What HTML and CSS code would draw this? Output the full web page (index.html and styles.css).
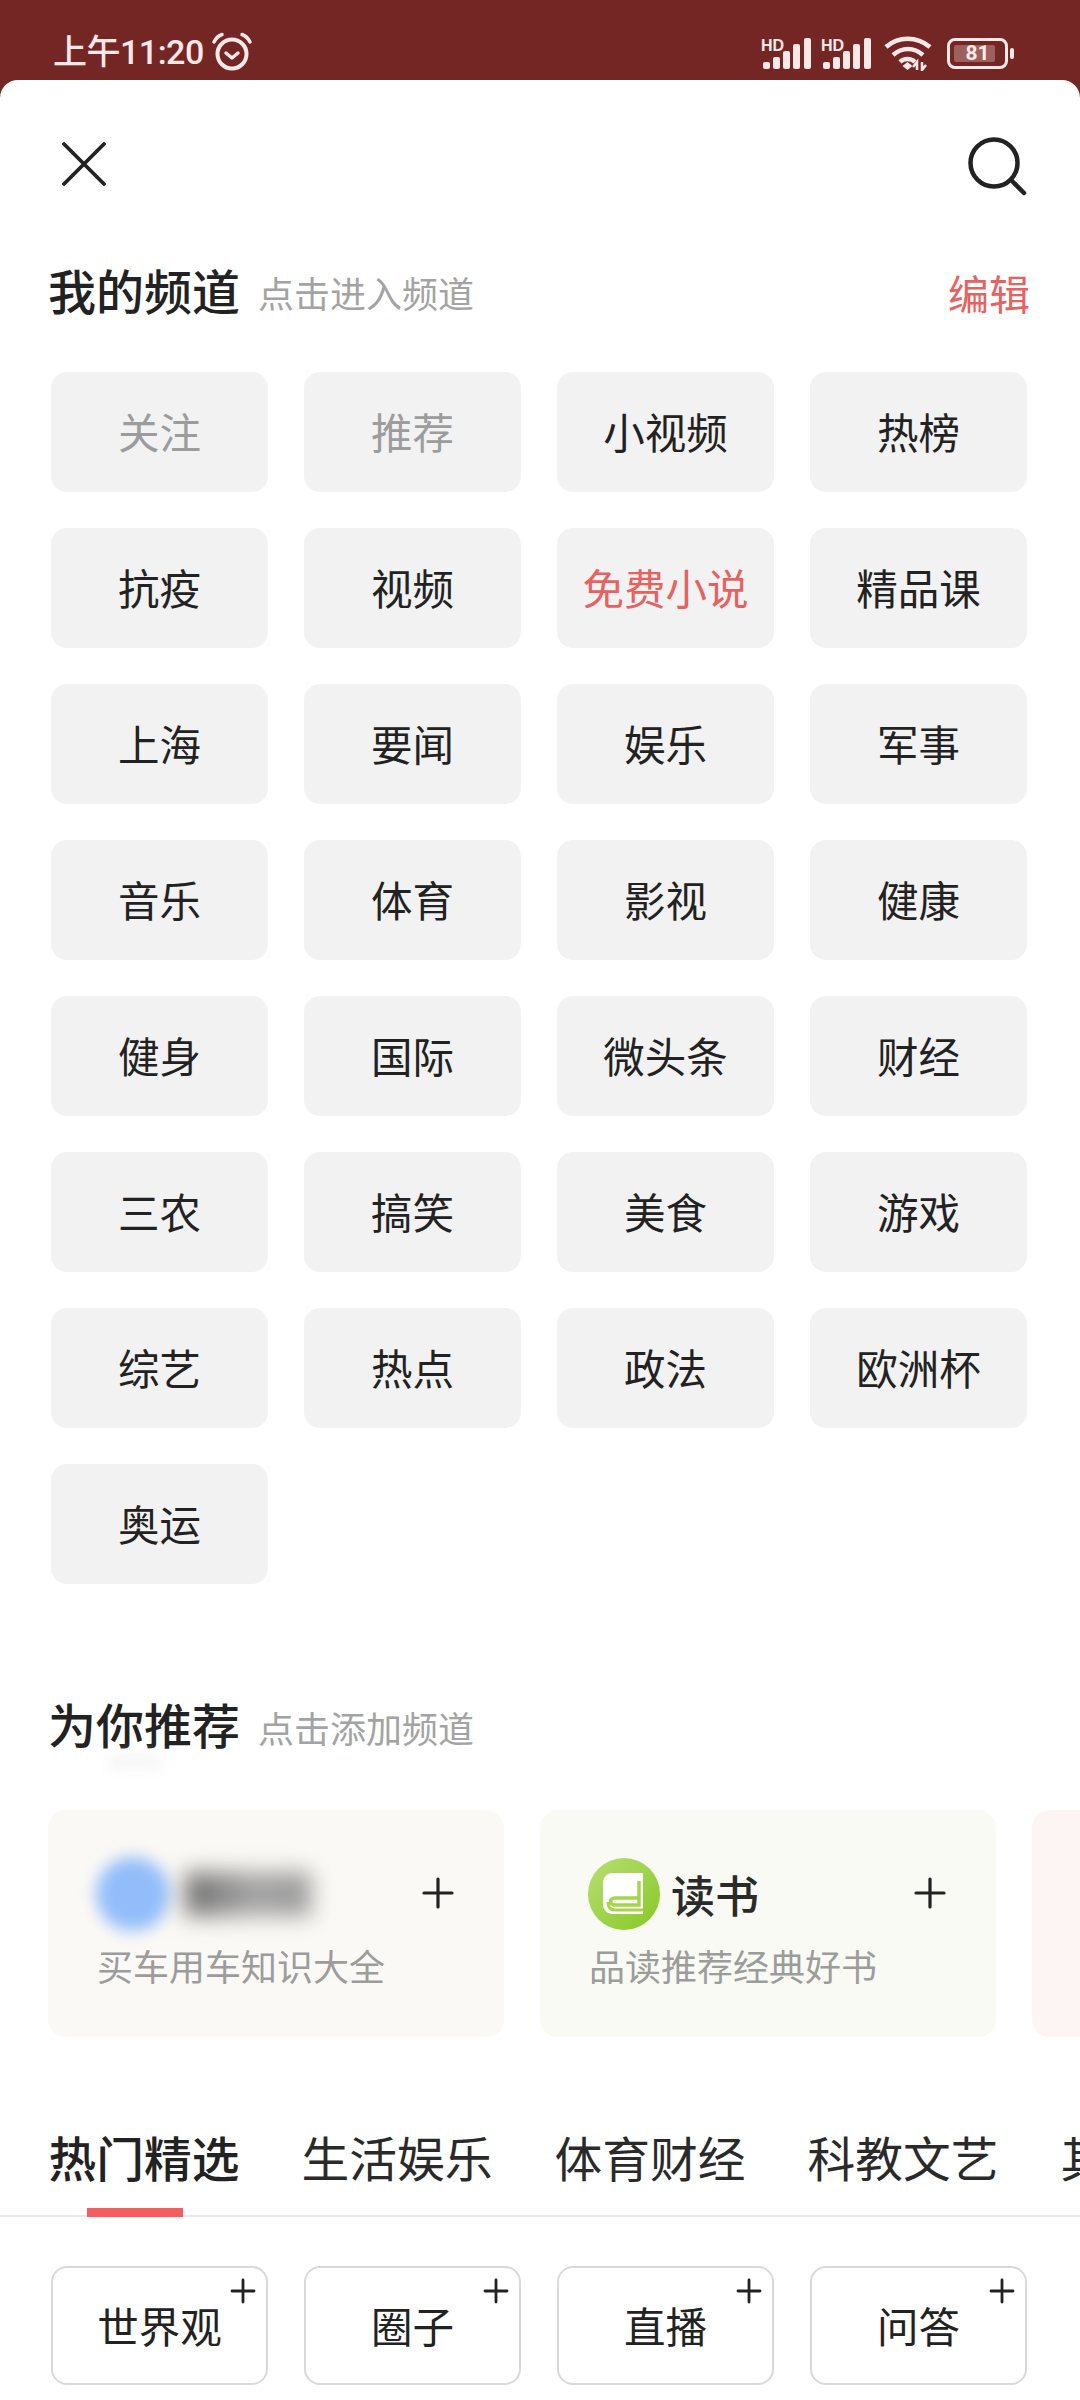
FILE: index.html
```html
<!DOCTYPE html>
<html lang="zh-CN">
<head>
<meta charset="utf-8">
<title>频道</title>
<link rel="stylesheet" href="styles.css">
</head>
<body>
<div class="status">
  <div class="status-left">
    <span class="clock">上午11:20</span>
    <svg class="alarm" width="42" height="40" viewBox="0 0 42 40" fill="none" stroke="#fbe9e7" stroke-linecap="round" stroke-linejoin="round">
      <circle cx="21" cy="22" r="14.5" stroke-width="4"/>
      <path d="M15 21l6 5 6-5" stroke-width="3.5"/>
      <path d="M3 10C5 6 8 3.500 11 2.500M39 10C37 6 34 3.500 31 2.500" stroke-width="3.500"/>
    </svg>
  </div>
  <div class="status-right">
    <svg class="signal" width="50" height="34" viewBox="0 0 50 34" fill="#fbe9e7">
      <text x="0" y="15" class="hd">HD</text>
      <rect x="2" y="26" width="7" height="7" rx="2"/><rect x="12" y="21" width="7" height="12" rx="2"/><rect x="22" y="15" width="7" height="18" rx="2"/><rect x="32" y="8" width="7" height="25" rx="2"/><rect x="43" y="2" width="7" height="31" rx="2"/>
    </svg>
    <svg class="signal" width="50" height="34" viewBox="0 0 50 34" fill="#fbe9e7">
      <text x="0" y="15" class="hd">HD</text>
      <rect x="2" y="26" width="7" height="7" rx="2"/><rect x="12" y="21" width="7" height="12" rx="2"/><rect x="22" y="15" width="7" height="18" rx="2"/><rect x="32" y="8" width="7" height="25" rx="2"/><rect x="43" y="2" width="7" height="31" rx="2"/>
    </svg>
    <svg class="wifi" width="48" height="36" viewBox="0 0 48 36" fill="none" stroke="#fbe9e7" stroke-width="4.500">
      <path d="M2 12C14 1 33 1 46 12"/>
      <path d="M9 20C18 12 30 12 39 20"/>
      <path d="M16 27C20 23 27 23 31 27"/>
      <path d="M18.500 31l5-4 5 4-5 4z" fill="#fbe9e7" stroke="none"/>
      <path d="M33 35v-8l-4 5M38 27v8l4-5" stroke-width="2.500"/>
    </svg>
    <div class="battery">
      <div class="battery-body">
        <span class="battery-fill"></span>
        <span class="battery-num">81</span>
      </div>
      <span class="battery-nub"></span>
    </div>
  </div>
</div>

<main class="sheet">
  <header class="top">
    <svg width="44" height="44" viewBox="0 0 44 44" fill="none" stroke="#222" stroke-width="3.800" stroke-linecap="round"><path d="M2 2l40 40M42 2L2 42"/></svg>
    <svg class="search" width="60" height="60" viewBox="0 0 60 60" fill="none" stroke="#222" stroke-width="4.500" stroke-linecap="round"><circle cx="26" cy="26" r="23.500"/><path d="M43 43l13 13"/></svg>
  </header>

  <div class="heading">
    <h2 class="heading-title">我的频道</h2>
    <span class="heading-sub">点击进入频道</span>
    <span class="edit">编辑</span>
  </div>

  <div class="grid">
    <div class="chip muted">关注</div><div class="chip muted">推荐</div><div class="chip">小视频</div><div class="chip">热榜</div>
    <div class="chip">抗疫</div><div class="chip">视频</div><div class="chip red">免费小说</div><div class="chip">精品课</div>
    <div class="chip">上海</div><div class="chip">要闻</div><div class="chip">娱乐</div><div class="chip">军事</div>
    <div class="chip">音乐</div><div class="chip">体育</div><div class="chip">影视</div><div class="chip">健康</div>
    <div class="chip">健身</div><div class="chip">国际</div><div class="chip">微头条</div><div class="chip">财经</div>
    <div class="chip">三农</div><div class="chip">搞笑</div><div class="chip">美食</div><div class="chip">游戏</div>
    <div class="chip">综艺</div><div class="chip">热点</div><div class="chip">政法</div><div class="chip">欧洲杯</div>
    <div class="chip">奥运</div>
  </div>

  <div class="heading heading-second">
    <h2 class="heading-title">为你推荐</h2>
    <span class="heading-sub">点击添加频道</span>
    <span class="smudge"></span>
  </div>

  <div class="rail">
    <article class="card card-cream">
      <div class="card-head">
        <span class="blur-avatar"></span>
        <span class="blur-name"></span>
        <svg class="card-plus" width="32" height="32" viewBox="0 0 32 32" stroke="#222" stroke-width="3.200" stroke-linecap="round"><path d="M2 16h28M16 2v28"/></svg>
      </div>
      <p class="card-sub">买车用车知识大全</p>
    </article>
    <article class="card card-green">
      <div class="card-head">
        <svg class="book" width="72" height="72" viewBox="0 0 72 72">
          <defs><linearGradient id="bookbg" x1="0" y1="0" x2="1" y2="1"><stop offset="0" stop-color="#b8de74"/><stop offset="1" stop-color="#86c924"/></linearGradient></defs>
          <circle cx="36" cy="36" r="36" fill="url(#bookbg)"/>
          <path d="M25 15H55V56H25C19 56 15 52 15 46V25C15 19 19 15 25 15Z" fill="#fff"/>
          <path d="M51 23V47H27C21 47 21 40 27 40H51" fill="none" stroke="#a4d64c" stroke-width="3.500"/>
          <path d="M20 44C20 49 22 52 27 52H55" fill="none" stroke="#a4d64c" stroke-width="3"/>
        </svg>
        <span class="card-title">读书</span>
        <svg class="card-plus" width="32" height="32" viewBox="0 0 32 32" stroke="#222" stroke-width="3.200" stroke-linecap="round"><path d="M2 16h28M16 2v28"/></svg>
      </div>
      <p class="card-sub">品读推荐经典好书</p>
    </article>
    <article class="card card-pink"></article>
  </div>

  <nav class="tabs">
    <span class="tab tab-active">热门精选<i class="tab-bar"></i></span>
    <span class="tab">生活娱乐</span>
    <span class="tab">体育财经</span>
    <span class="tab">科教文艺</span>
    <span class="tab">其他</span>
  </nav>

  <div class="grid grid-add">
    <div class="chip chip-add">世界观<svg class="add" width="26" height="26" viewBox="0 0 26 26" stroke="#222" stroke-width="2.800" stroke-linecap="round"><path d="M2 13h22M13 2v22"/></svg></div>
    <div class="chip chip-add">圈子<svg class="add" width="26" height="26" viewBox="0 0 26 26" stroke="#222" stroke-width="2.800" stroke-linecap="round"><path d="M2 13h22M13 2v22"/></svg></div>
    <div class="chip chip-add">直播<svg class="add" width="26" height="26" viewBox="0 0 26 26" stroke="#222" stroke-width="2.800" stroke-linecap="round"><path d="M2 13h22M13 2v22"/></svg></div>
    <div class="chip chip-add">问答<svg class="add" width="26" height="26" viewBox="0 0 26 26" stroke="#222" stroke-width="2.800" stroke-linecap="round"><path d="M2 13h22M13 2v22"/></svg></div>
  </div>
</main>
</body>
</html>
```

FILE: styles.css
```css
* { box-sizing: border-box; }
html, body {
  margin: 0;
  width: 1080px;
  height: 2400px;
  overflow: hidden;
  background: #742625;
  font-family: "Noto Sans CJK SC", "Noto Sans", sans-serif;
  color: #222;
}
h2, p { margin: 0; }

.status {
  height: 80px;
  display: flex;
  justify-content: space-between;
  align-items: flex-start;
  padding: 32px 66px 0 53px;
  color: #fbe9e7;
}
.status-left { display: flex; align-items: center; gap: 7px; }
.clock { font: 500 34px/40px Roboto, "Noto Sans CJK SC", sans-serif; letter-spacing: -0.500px; }
.status-right { display: flex; align-items: center; gap: 10px; padding-top: 3px; }
.hd { font: 700 16px "Liberation Sans", sans-serif; }
.wifi { margin: 0 3px; }
.battery { display: flex; align-items: center; gap: 2px; margin-left: 2px; }
.battery-body {
  position: relative;
  width: 61px;
  height: 31px;
  border: 3px solid #fbe9e7;
  border-radius: 8px;
  display: flex;
  align-items: center;
  justify-content: center;
}
.battery-fill {
  position: absolute;
  left: 4px; top: 4px; bottom: 4px;
  width: 41px;
  background: rgba(251, 233, 231, .3);
  border-radius: 2px;
}
.battery-num { position: relative; font: 700 21px/24px Roboto, sans-serif; }
.battery-nub { width: 4px; height: 11px; background: #fbe9e7; border-radius: 2px; }

.sheet {
  height: 2320px;
  background: #fff;
  border-radius: 18px 18px 0 0;
  overflow: hidden;
}
.top {
  height: 168px;
  display: flex;
  justify-content: space-between;
  align-items: center;
  padding: 0 52px 0 62px;
}
.search { margin-top: 6px; }
.heading {
  position: relative;
  height: 84px;
  display: flex;
  align-items: center;
  gap: 18px;
  padding: 0 50px 0 48px;
}
.heading-title { font-size: 48px; line-height: 60px; font-weight: 500; padding-bottom: 2px; }
.heading-sub { font-size: 36px; line-height: 60px; color: #a3a3a3; padding-top: 4px; }
.edit { margin-left: auto; font-size: 41px; line-height: 60px; color: #e96060; padding-top: 4px; }
.heading-second { margin-top: 99px; }
.heading-second .heading-title { padding-bottom: 4px; }
.smudge {
  position: absolute;
  left: 108px; top: 74px;
  width: 54px; height: 10px;
  background: #f2f2f2;
  filter: blur(7px);
}

.grid {
  margin-top: 40px;
  padding: 0 53px 0 51px;
  display: grid;
  grid-template-columns: repeat(4, 217px);
  justify-content: space-between;
  row-gap: 36px;
}
.chip {
  position: relative;
  height: 120px;
  border-radius: 16px;
  background: #f2f2f2;
  display: flex;
  align-items: center;
  justify-content: center;
  padding-bottom: 2px;
  font-size: 41.500px;
  line-height: 50px;
  color: #222;
}
.muted { color: #9c9c9c; }
.red { color: #e96060; }

.rail {
  margin-top: 43px;
  padding-left: 48px;
  display: flex;
  gap: 36px;
}
.card {
  flex: 0 0 456px;
  height: 227px;
  border-radius: 18px;
  padding: 48px 0 0 48px;
}
.card-cream { background: #fbf9f5; }
.card-green { background: #f8faf3; }
.card-pink { background: #fdf5f4; }
.card-head {
  position: relative;
  height: 72px;
  display: flex;
  align-items: center;
  gap: 11px;
}
.card-title { font-size: 44px; line-height: 60px; font-weight: 500; color: #2a2a2a; }
.card-plus { position: absolute; right: 50px; top: 19px; }
.blur-avatar {
  width: 74px; height: 74px;
  border-radius: 50%;
  background: #92bdfa;
  filter: blur(8px);
}
.blur-name {
  width: 126px; height: 44px;
  margin-left: 4px;
  background: linear-gradient(90deg, #6f6f6f, #a5a5a5 55%, #9a9a9a);
  filter: blur(11px);
}
.card-sub { margin: 12px 0 0 1px; font-size: 36px; line-height: 46px; color: #9c9c9c; }

.tabs {
  position: relative;
  margin-top: 88px;
  padding: 0 0 26px 48.500px;
  display: flex;
  gap: 62px;
  height: 92px;
  border-bottom: 2px solid #e9e9e9;
  white-space: nowrap;
}
.tab { position: relative; font-size: 47.750px; line-height: 64px; color: #2a2a2a; }
.tab-active { font-weight: 500; color: #222; }
.tab-bar {
  position: absolute;
  left: 38px; top: 83px;
  width: 96px; height: 9px;
  background: #f45e60;
}
.grid-add { margin-top: 49px; }
.chip-add {
  height: 119px;
  background: #fff;
  border: 2px solid #d9d9d9;
  font-size: 41.500px;
}
.add { position: absolute; right: 10px; top: 10px; }
```
